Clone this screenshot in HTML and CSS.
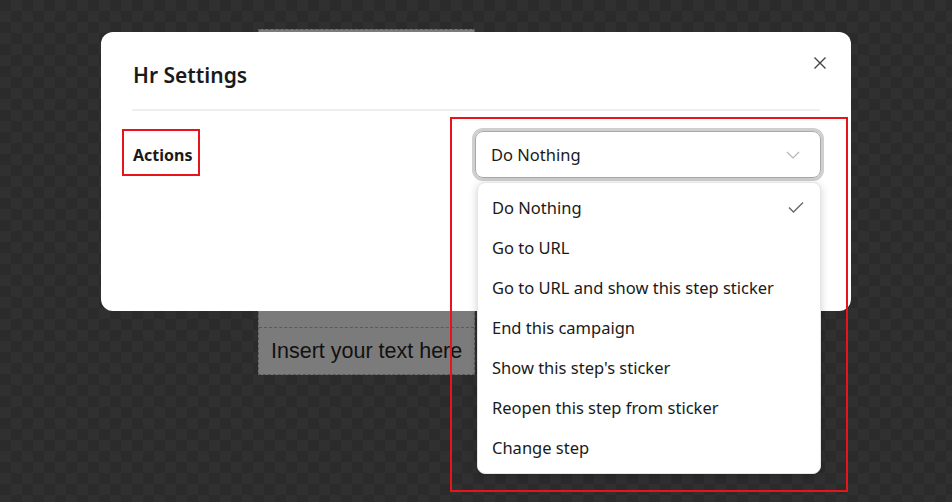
FILE: index.html
```html
<!DOCTYPE html>
<html lang="en">
<head>
    <meta charset="UTF-8" />
    <meta name="viewport" content="width=device-width, initial-scale=1.0" />
    <title>Hr Settings</title>
    <link rel="stylesheet" href="styles.css">
</head>
<body>
    <div class="canvas">
        <!-- sticker on the editor canvas -->
        <div class="sticker">
            <div class="sticker-text">Insert your text here</div>
        </div>

        <div class="modal">
            <div class="modal-header">
                <h2>Hr Settings</h2>
                <button class="close-btn" aria-label="Close">
                    <svg width="14" height="14" viewBox="0 0 14 14">
                        <path d="M1.5 1.5 L12.5 12.5 M12.5 1.5 L1.5 12.5" stroke="#444" stroke-width="1.4" fill="none" />
                    </svg>
                </button>
            </div>
            <div class="modal-body">
                <div class="field-label">Actions</div>
                <div class="select">
                    <span>Do Nothing</span>
                    <svg width="14" height="8" viewBox="0 0 14 8">
                        <path d="M1 1 L7 7 L13 1" stroke="#b5b5b5" stroke-width="1.2" fill="none" />
                    </svg>
                </div>
            </div>
        </div>

        <ul class="dropdown">
            <li class="selected">Do Nothing
                <svg width="16" height="12" viewBox="0 0 16 12">
                    <path d="M1 6.5 L5.5 11 L15 1.5" stroke="#666" stroke-width="1.3" fill="none" />
                </svg>
            </li>
            <li>Go to URL</li>
            <li>Go to URL and show this step sticker</li>
            <li>End this campaign</li>
            <li>Show this step's sticker</li>
            <li>Reopen this step from sticker</li>
            <li>Change step</li>
        </ul>

        <div class="mark mark-label"></div>
        <div class="mark mark-select"></div>
    </div>
</body>
</html>
```

FILE: styles.css
```css
body {
    margin: 0;
    font-family: "Noto Sans", "Open Sans", sans-serif;
    color: #1a1a1a;
}

.canvas {
    position: relative;
    width: 952px;
    height: 502px;
    overflow: hidden;
    background-color: #2b2b2b;
    background-image: conic-gradient(#303030 25%, #2b2b2b 0 50%, #303030 0 75%, #2b2b2b 0);
    background-size: 22px 22px;
}

.sticker {
    position: absolute;
    left: 258px;
    top: 29px;
    width: 217px;
    height: 346px;
    box-sizing: border-box;
    background-color: #7b7b7b;
    border: 1px dashed #5a5a5a;
    display: flex;
    flex-direction: column;
    justify-content: flex-end;
}

.sticker-text {
    height: 46px;
    border-top: 1px dashed #5a5a5a;
    display: flex;
    align-items: center;
    padding-left: 12px;
    font-family: "Liberation Sans", Arial, sans-serif;
    font-size: 21.5px;
    color: #111;
    white-space: nowrap;
}

.modal {
    position: absolute;
    left: 101px;
    top: 32px;
    width: 750px;
    height: 279px;
    box-sizing: border-box;
    background: #fff;
    border-radius: 12px;
    padding: 0 31px 0 31px;
}

.modal-header {
    display: flex;
    justify-content: space-between;
    align-items: flex-start;
    border-bottom: 2px solid #eeeeee;
    height: 79px;
    box-sizing: border-box;
}

.modal-header h2 {
    margin: 28px 0 0 1px;
    font-size: 21px;
    font-weight: 600;
    line-height: 30px;
}

.close-btn {
    background: none;
    border: 0;
    padding: 0;
    margin: 24px -7px 0 0;
    width: 14px;
    height: 14px;
    cursor: pointer;
}

.modal-body {
    display: flex;
    justify-content: space-between;
    align-items: flex-start;
    padding-top: 20px;
}

.field-label {
    font-weight: 700;
    font-size: 16px;
    line-height: 47px;
    padding: 1px 0 0 1px;
}

.select {
    width: 346px;
    height: 47px;
    box-sizing: border-box;
    border: 1px solid #a8a8a8;
    border-radius: 8px;
    box-shadow: 0 0 0 3px #cfcfcf;
    display: flex;
    justify-content: space-between;
    align-items: center;
    padding: 0 20px 0 15px;
    font-size: 16.5px;
    margin-right: -1px;
}

.dropdown {
    position: absolute;
    left: 477px;
    top: 182px;
    width: 344px;
    margin: 0;
    padding: 4px 0 6px;
    list-style: none;
    background: #fff;
    border-radius: 8px;
    box-shadow: 0 2px 8px rgba(0, 0, 0, 0.18);
    border: 1px solid #e6e6e6;
    box-sizing: border-box;
}

.dropdown li {
    height: 40px;
    display: flex;
    align-items: center;
    justify-content: space-between;
    padding: 0 16px 0 14px;
    font-size: 16.5px;
}

.mark {
    position: absolute;
    border: 2px solid #e8141b;
    box-sizing: border-box;
}

.mark-label {
    left: 122px;
    top: 129px;
    width: 78px;
    height: 47px;
}

.mark-select {
    left: 450px;
    top: 117px;
    width: 398px;
    height: 375px;
}
```
